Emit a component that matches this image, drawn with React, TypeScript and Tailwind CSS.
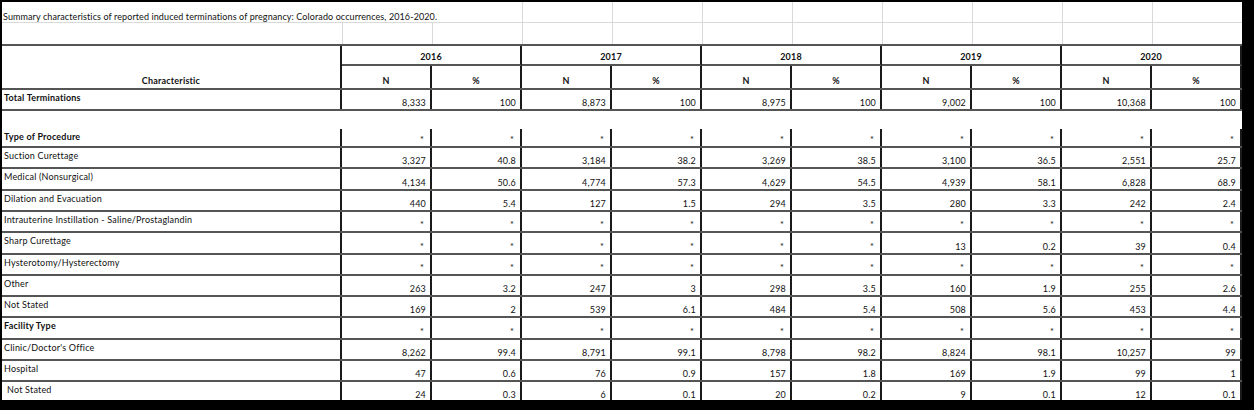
import React from 'react';

type R = { label: string; bold?: boolean; vals: string[]; h: string; indent?: boolean };

const S = ['*', '*', '*', '*', '*', '*', '*', '*', '*', '*'];

const body: R[] = [
  { label: 'Type of Procedure', bold: true, vals: S, h: 'h-[19px]' },
  { label: 'Suction Curettage', vals: ['3,327', '40.8', '3,184', '38.2', '3,269', '38.5', '3,100', '36.5', '2,551', '25.7'], h: 'h-[21px]' },
  { label: 'Medical (Nonsurgical)', vals: ['4,134', '50.6', '4,774', '57.3', '4,629', '54.5', '4,939', '58.1', '6,828', '68.9'], h: 'h-[22px]' },
  { label: 'Dilation and Evacuation', vals: ['440', '5.4', '127', '1.5', '294', '3.5', '280', '3.3', '242', '2.4'], h: 'h-[21px]' },
  { label: 'Intrauterine Instillation - Saline/Prostaglandin', vals: S, h: 'h-[21px]' },
  { label: 'Sharp Curettage', vals: ['*', '*', '*', '*', '*', '*', '13', '0.2', '39', '0.4'], h: 'h-[22px]' },
  { label: 'Hysterotomy/Hysterectomy', vals: S, h: 'h-[21px]' },
  { label: 'Other', vals: ['263', '3.2', '247', '3', '298', '3.5', '160', '1.9', '255', '2.6'], h: 'h-[21px]' },
  { label: 'Not Stated', vals: ['169', '2', '539', '6.1', '484', '5.4', '508', '5.6', '453', '4.4'], h: 'h-[21px]' },
  { label: 'Facility Type', bold: true, vals: S, h: 'h-[22px]' },
  { label: "Clinic/Doctor's Office", vals: ['8,262', '99.4', '8,791', '99.1', '8,798', '98.2', '8,824', '98.1', '10,257', '99'], h: 'h-[21px]' },
  { label: 'Hospital', vals: ['47', '0.6', '76', '0.9', '157', '1.8', '169', '1.9', '99', '1'], h: 'h-[21px]' },
  { label: 'Not Stated', indent: true, vals: ['24', '0.3', '6', '0.1', '20', '0.2', '9', '0.1', '12', '0.1'], h: 'h-[21px]' },
];

const years = ['2016', '2017', '2018', '2019', '2020'];
const GRID = 'grid grid-cols-[340px_repeat(10,90px)]';

function ValueCell({ v }: { v: string }) {
  return (
    <div className={`flex items-end justify-end border-r-2 border-[#1a1a1a] pb-[1px] leading-[11px] ${v === '*' ? 'pr-[6px]' : 'pr-[4px]'}`}>
      {v}
    </div>
  );
}

function DataRow({ r }: { r: R }) {
  return (
    <div className={`${GRID} ${r.h} border-b-2 border-[#555]`}>
      <div className={`border-r-2 border-[#1a1a1a] pt-[2px] leading-[11px] whitespace-nowrap ${r.indent ? 'pl-[5px]' : 'pl-[2px]'} ${r.bold ? 'font-bold' : ''}`}>
        {r.label}
      </div>
      {r.vals.map((v, i) => (
        <ValueCell key={i} v={v} />
      ))}
    </div>
  );
}

export default function App() {
  return (
    <div className="w-[1254px] h-[410px] bg-black pt-[2px] pl-[2px] overflow-hidden">
      <div
        className="w-[1240px] h-[398px] bg-white overflow-hidden text-[9px] tracking-[0.2px] text-[#111]"
        style={{ fontFamily: 'Lato, "Open Sans", sans-serif' }}
      >
        {/* title row */}
        <div className={`${GRID} h-[21px] border-b border-[#d9d9d9]`}>
          <div className="col-span-3 flex items-end pl-[1px] pb-0 leading-[11px] whitespace-nowrap tracking-[0.1px]">
            Summary characteristics of reported induced terminations of pregnancy: Colorado occurrences, 2016-2020.
          </div>
          {[0, 1, 2, 3, 4, 5, 6, 7].map((i) => (
            <div key={i} className="border-l border-[#d9d9d9]" />
          ))}
        </div>
        {/* empty row */}
        <div className={`${GRID} h-[21px]`}>
          <div />
          {[0, 1, 2, 3, 4, 5, 6, 7, 8, 9].map((i) => (
            <div key={i} className="border-l border-[#d9d9d9]" />
          ))}
        </div>
        {/* header */}
        <div className={`${GRID} grid-rows-[20px_22px] border-y-2 border-[#555] font-bold`}>
          <div className="row-span-2 flex items-end justify-center border-r-2 border-[#1a1a1a] pb-[2px] leading-[11px]">
            Characteristic
          </div>
          {years.map((y) => (
            <div key={y} className="col-span-2 flex items-end justify-center border-r-2 border-b-2 border-r-[#1a1a1a] border-b-[#555] pb-[2px] leading-[11px]">
              {y}
            </div>
          ))}
          {years.map((y) => (
            <React.Fragment key={y}>
              <div className="flex items-end justify-center border-r-2 border-[#1a1a1a] pb-[2px] leading-[11px]">N</div>
              <div className="flex items-end justify-center border-r-2 border-[#1a1a1a] pb-[2px] leading-[11px]">%</div>
            </React.Fragment>
          ))}
        </div>
        {/* total */}
        <DataRow
          r={{
            label: 'Total Terminations',
            bold: true,
            vals: ['8,333', '100', '8,873', '100', '8,975', '100', '9,002', '100', '10,368', '100'],
            h: 'h-[21px]',
          }}
        />
        {/* gap */}
        <div className="h-[18px]" />
        {body.map((r, i) => (
          <DataRow key={i} r={r} />
        ))}
      </div>
    </div>
  );
}
